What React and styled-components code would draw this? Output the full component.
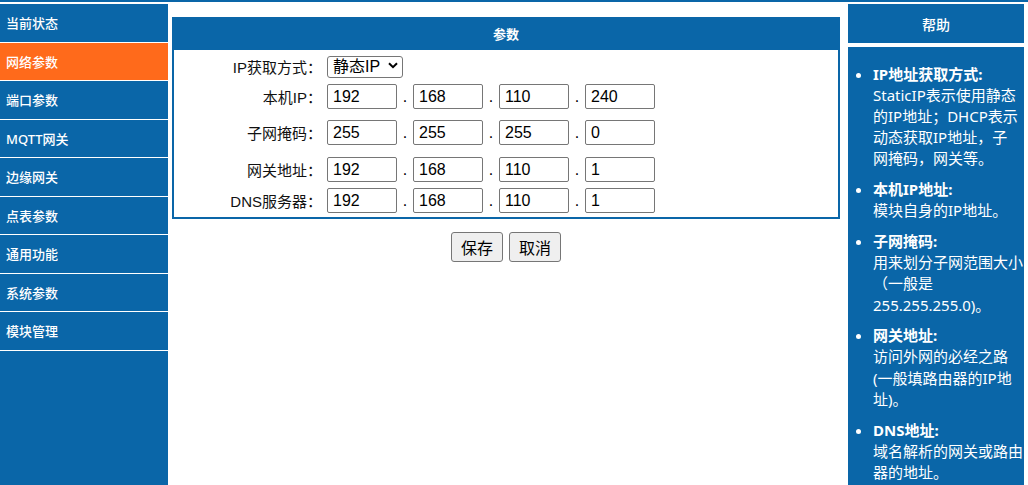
import React from "react";
import styled, { createGlobalStyle } from "styled-components";

const BLUE = "#0a66a8";
const ORANGE = "#ff6a1b";

const GlobalStyle = createGlobalStyle`
  html, body { margin: 0; padding: 0; background: #fff; }
  body { font-family: "Noto Sans", "Noto Sans CJK SC", sans-serif; }
  * { box-sizing: border-box; }
`;

const Page = styled.div`
  display: flex;
  align-items: stretch;
  min-height: 100vh;
  border-top: 2px solid ${BLUE};
  padding-top: 2px;
`;

const Sidebar = styled.nav`
  width: 168px;
  flex-shrink: 0;
  background: ${BLUE};
`;

const NavItem = styled.div`
  height: 38.5px;
  display: flex;
  align-items: center;
  padding-left: 6px;
  border-bottom: 1px solid #fff;
  background: ${(p) => (p.$active ? ORANGE : BLUE)};
  color: #fff;
  font-family: "Noto Sans", "Noto Sans CJK SC", sans-serif;
  font-size: 13px;
  font-weight: 500;
`;

const Main = styled.main`
  width: 668px;
  flex-shrink: 0;
  margin-left: 4px;
  padding-top: 13px;
`;

const Panel = styled.section`
  border: 2px solid ${BLUE};
  border-top: none;
`;

const PanelHeader = styled.div`
  height: 33px;
  margin: 0 -2px;
  background: ${BLUE};
  color: #fff;
  display: flex;
  align-items: center;
  justify-content: center;
  font-size: 13px;
  font-weight: bold;
  font-family: "Noto Sans", "Noto Sans CJK SC", sans-serif;
`;

const PanelBody = styled.div`
  padding-bottom: 4px;
`;

const Row = styled.div`
  display: flex;
  align-items: center;
  margin-top: ${(p) => p.$top}px;
`;

const Label = styled.label`
  width: 148px;
  margin-right: 5px;
  text-align: right;
  font-family: "Liberation Sans", "Noto Sans CJK SC", sans-serif;
  font-size: 15px;
  color: #111;
  white-space: nowrap;
`;

const Input = styled.input`
  width: 70px;
  height: 25px;
  padding: 0 0 0 5px;
  border: 1px solid #767676;
  border-radius: 2px;
  font-family: "Liberation Sans", "Noto Sans CJK SC", sans-serif;
  font-size: 16px;
  color: #000;
  background: #fff;
  outline: none;
`;

const Dot = styled.span`
  width: 16px;
  text-align: center;
  font-family: "Liberation Sans", sans-serif;
  font-size: 16px;
  line-height: 25px;
  color: #000;
`;

const SelectWrap = styled.div`
  position: relative;
  width: 76px;
  height: 22px;
`;

const Select = styled.select`
  appearance: none;
  width: 100%;
  height: 100%;
  padding: 0 0 0 5px;
  border: 1px solid #767676;
  border-radius: 3px;
  background: #fff;
  font-family: "Liberation Sans", "Noto Sans CJK SC", sans-serif;
  font-size: 16px;
  color: #000;
  outline: none;
`;

const Chevron = styled.svg`
  position: absolute;
  right: 5px;
  top: 7px;
  pointer-events: none;
`;

const ButtonRow = styled.div`
  display: flex;
  justify-content: center;
  gap: 6px;
  margin-top: 13px;
`;

const Button = styled.button`
  height: 30px;
  padding: 0 9px;
  border: 1px solid #767676;
  border-radius: 3px;
  background: #efefef;
  font-family: "Noto Sans CJK SC", sans-serif;
  font-size: 16px;
  color: #000;
`;

const Help = styled.aside`
  width: 176px;
  flex-shrink: 0;
  margin-left: 8px;
  display: flex;
  flex-direction: column;
`;

const HelpHeader = styled.div`
  height: 39px;
  background: ${BLUE};
  color: #fff;
  display: flex;
  align-items: center;
  justify-content: center;
  font-size: 14px;
  font-weight: 500;
  margin-bottom: 4px;
`;

const HelpBody = styled.div`
  flex: 1;
  background: ${BLUE};
  color: #fff;
`;

const HelpList = styled.ul`
  margin: 0;
  padding: 16.5px 0 0 25px;
  list-style: disc;
`;

const HelpItem = styled.li`
  font-family: "Noto Sans", "Noto Sans CJK SC", sans-serif;
  font-size: 15px;
  line-height: 21.2px;
  margin-bottom: 9.5px;
`;

const HelpTitle = styled.span`
  display: block;
  font-weight: bold;
  white-space: nowrap;
`;

const HelpLine = styled.span`
  display: block;
  white-space: nowrap;
`;

const navItems = [
  "当前状态",
  "网络参数",
  "端口参数",
  "MQTT网关",
  "边缘网关",
  "点表参数",
  "通用功能",
  "系统参数",
  "模块管理",
];

const ipRows = [
  { label: "本机IP：", values: ["192", "168", "110", "240"], top: 7 },
  { label: "子网掩码：", values: ["255", "255", "255", "0"], top: 11 },
  { label: "网关地址：", values: ["192", "168", "110", "1"], top: 12 },
  { label: "DNS服务器：", values: ["192", "168", "110", "1"], top: 6 },
];

const helpItems = [
  {
    title: "IP地址获取方式:",
    lines: ["StaticIP表示使用静态", "的IP地址；DHCP表示", "动态获取IP地址，子", "网掩码，网关等。"],
  },
  { title: "本机IP地址:", lines: ["模块自身的IP地址。"] },
  {
    title: "子网掩码:",
    lines: ["用来划分子网范围大小", "（一般是", "255.255.255.0)。"],
  },
  {
    title: "网关地址:",
    lines: ["访问外网的必经之路", "(一般填路由器的IP地", "址)。"],
  },
  { title: "DNS地址:", lines: ["域名解析的网关或路由", "器的地址。"] },
];

function IpField({ values }) {
  return (
    <>
      {values.map((v, i) => (
        <React.Fragment key={i}>
          {i > 0 && <Dot>.</Dot>}
          <Input defaultValue={v} />
        </React.Fragment>
      ))}
    </>
  );
}

export default function App() {
  return (
    <>
      <GlobalStyle />
      <Page>
        <Sidebar>
          {navItems.map((n) => (
            <NavItem key={n} $active={n === "网络参数"}>
              {n}
            </NavItem>
          ))}
        </Sidebar>
        <Main>
          <Panel>
            <PanelHeader>参数</PanelHeader>
            <PanelBody>
              <Row $top={5}>
                <Label>IP获取方式：</Label>
                <SelectWrap>
                  <Select defaultValue="static">
                    <option value="static">静态IP</option>
                    <option value="dhcp">DHCP</option>
                  </Select>
                  <Chevron width="10" height="7" viewBox="0 0 10 7">
                    <path d="M1 1.2 L5 5.2 L9 1.2" fill="none" stroke="#000" strokeWidth="2" />
                  </Chevron>
                </SelectWrap>
              </Row>
              {ipRows.map((r) => (
                <Row key={r.label} $top={r.top}>
                  <Label>{r.label}</Label>
                  <IpField values={r.values} />
                </Row>
              ))}
            </PanelBody>
          </Panel>
          <ButtonRow>
            <Button>保存</Button>
            <Button>取消</Button>
          </ButtonRow>
        </Main>
        <Help>
          <HelpHeader>帮助</HelpHeader>
          <HelpBody>
            <HelpList>
              {helpItems.map((h) => (
                <HelpItem key={h.title}>
                  <HelpTitle>{h.title}</HelpTitle>
                  {h.lines.map((l) => (
                    <HelpLine key={l}>{l}</HelpLine>
                  ))}
                </HelpItem>
              ))}
            </HelpList>
          </HelpBody>
        </Help>
      </Page>
    </>
  );
}
